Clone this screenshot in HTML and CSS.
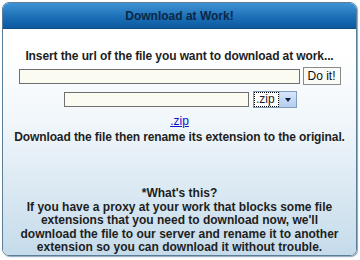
FILE: index.html
```html
<!DOCTYPE html>
<html lang="en">
<head>
    <meta charset="UTF-8">
    <title>Download at Work!</title>
    <link rel="stylesheet" href="styles.css">
</head>
<body>
<div class="panel">
    <div class="panel-head">Download at Work!</div>
    <div class="panel-body">
        <p class="lead">Insert the url of the file you want to download at work...</p>
        <div class="row">
            <input type="text" class="url">
            <button class="go">Do it!</button>
        </div>
        <div class="row">
            <input type="text" class="name">
            <div class="ext">
                <span class="ext-val">.zip</span>
                <span class="ext-btn"></span>
            </div>
        </div>
        <a href="#" class="ext-link">.zip</a>
        <p class="note">Download the file then rename its extension to the original.</p>

        <div class="about">
            *What's this?<br>
            If you have a proxy at your work that blocks some file<br>
            extensions that you need to download now, we'll<br>
            download the file to our server and rename it to another<br>
            extension so you can download it without trouble.
        </div>
    </div>
</div>
</body>
</html>
```

FILE: styles.css
```css
body {
    margin: 0;
    padding: 2px 3px 3px 2px;
    background: #fff;
    font-family: "Liberation Sans", Arial, sans-serif;
    font-size: 12px;
    font-weight: bold;
    color: #1e1e1e;
}

.panel {
    height: 254px;
    box-sizing: border-box;
    border: 1px solid #5a7d99;
    border-radius: 7px;
    overflow: hidden;
    display: flex;
    flex-direction: column;
    box-shadow: 1px 1px 1px #8fa8bc;
}

.panel-head {
    height: 25px;
    line-height: 26px;
    text-align: center;
    color: #0b2745;
    background: linear-gradient(#3f93d4, #1a6db4 60%, #0c5aa0);
    border-bottom: 1px solid #0a4c87;
}

.panel-body {
    flex: 1;
    background: linear-gradient(#fff 12%, #eef5fa 45%, #c5dbea);
    text-align: center;
    padding-top: 20px;
}

.lead {
    margin: 0 0 3px;
    line-height: 15px;
    letter-spacing: -0.1px;
}

.row {
    display: flex;
    justify-content: center;
    align-items: center;
    gap: 3px;
    margin-bottom: 6px;
}

.row:nth-of-type(2) {
    margin-left: 2px;
}

input {
    height: 15px;
    box-sizing: border-box;
    border: 1px solid #6f6f6f;
    background: #fbfbf1;
    padding: 0;
}

.url {
    width: 281px;
}

.name {
    width: 185px;
    margin-right: 1px;
}

.go {
    height: 18px;
    width: 38px;
    padding: 0;
    border: 1px solid #8a8a8a;
    background: #fafaf6;
    font-family: "Liberation Sans", Arial, sans-serif;
    font-size: 12px;
    font-weight: normal;
    color: #111;
}

.ext {
    display: flex;
    height: 17px;
    width: 44px;
    box-sizing: border-box;
    border: 1px solid #7f9db9;
    background: #fff;
}

.ext-val {
    flex: 1;
    outline: 1px dotted #000;
    outline-offset: -1px;
    font-weight: normal;
    font-size: 12px;
    line-height: 15px;
    text-align: left;
    padding-left: 2px;
}

.ext-btn {
    width: 16px;
    position: relative;
    background: linear-gradient(#d7e6fa, #b4cdf0);
    border-left: 1px solid #b9cde8;
}

.ext-btn:after {
    content: "";
    position: absolute;
    left: 5px;
    top: 6px;
    border-left: 3px solid transparent;
    border-right: 3px solid transparent;
    border-top: 4px solid #0d1f3c;
}

.ext-link {
    display: inline-block;
    color: #1010c8;
    font-weight: normal;
    font-size: 12px;
    line-height: 14px;
}

.note {
    margin: 2px 0 0;
    line-height: 15px;
    letter-spacing: -0.1px;
}

.about {
    margin-top: 42px;
    line-height: 13.5px;
    white-space: nowrap;
}
```
